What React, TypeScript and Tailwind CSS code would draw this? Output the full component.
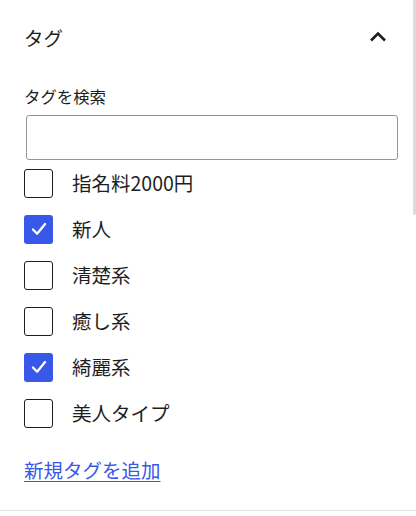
export default function App() {
  const tags = [
    { name: "指名料2000円", checked: false },
    { name: "新人", checked: true },
    { name: "清楚系", checked: false },
    { name: "癒し系", checked: false },
    { name: "綺麗系", checked: true },
    { name: "美人タイプ", checked: false },
  ];

  return (
    <div
      className="relative w-[416px] h-[516px] bg-white overflow-hidden text-[#1e1e1e]"
      style={{ fontFamily: '"Noto Sans CJK JP", "Noto Sans", sans-serif' }}
    >
      <div className="h-[511px] border-b border-[#dddddd]">
        <div className="flex items-center justify-between pl-6 pr-[28px] h-[76px]">
          <span className="text-[19.5px] leading-[24px]">タグ</span>
          <svg width="20" height="20" viewBox="0 0 20 20" className="mt-[-2px]">
            <polyline
              points="3,13.5 10,6.5 17,13.5"
              fill="none"
              stroke="#1e1e1e"
              strokeWidth="2.6"
            />
          </svg>
        </div>

        <div className="pl-6 mt-[10px] text-[16.4px] leading-[20px]">タグを検索</div>

        <div className="ml-[26px] mt-[9px] w-[372px] h-[45px] rounded-[3px] border border-[#949494]" />

        <div className="mt-[8px] pl-6 flex flex-col gap-4">
          {tags.map((t, i) => (
            <div key={i} className="flex items-center gap-[19px] h-[30px]">
              {t.checked ? (
                <div className="w-[29px] h-[29px] rounded-[3px] bg-[#3858e9] flex items-center justify-center">
                  <svg width="22" height="22" viewBox="0 0 20 20">
                    <polyline
                      points="4.5,10.5 8.3,14.3 15.5,5.5"
                      fill="none"
                      stroke="#ffffff"
                      strokeWidth="2.1"
                      strokeLinecap="round"
                      strokeLinejoin="round"
                    />
                  </svg>
                </div>
              ) : (
                <div className="w-[29px] h-[29px] rounded-[3px] border border-[#1e1e1e] bg-white" />
              )}
              <span className="text-[19.5px] leading-[24px]">{t.name}</span>
            </div>
          ))}
        </div>

        <div className="pl-6 mt-[30px]">
          <a className="text-[19.5px] leading-[24px] text-[#3858e9] underline underline-offset-[3px]">
            新規タグを追加
          </a>
        </div>
      </div>

      <div className="absolute right-0 top-0 w-[3px] h-[215px] rounded-b-full bg-[#dcdcdc]" />
    </div>
  );
}
